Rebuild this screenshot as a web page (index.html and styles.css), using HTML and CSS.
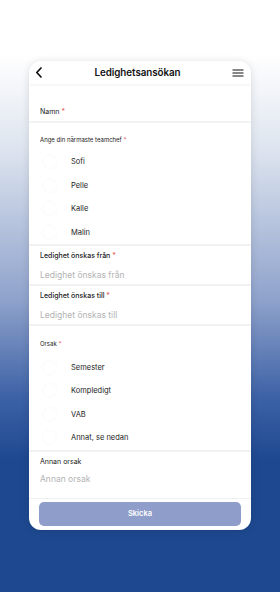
FILE: index.html
```html
<!DOCTYPE html>
<html>
<head>
    <title>Ledighetsansökan</title>
    <link rel="stylesheet" href="styles.css">
</head>
<body>
    <div class="page">
        <div class="card">
            <!-- Top bar -->
            <div class="topbar">
                <svg class="back" width="8" height="11" viewBox="0 0 8 11">
                    <path d="M6 1 L1.8 5.5 L6 10" fill="none" stroke="#111" stroke-width="1.7" stroke-linecap="round" stroke-linejoin="round"/>
                </svg>
                <div class="title">Ledighetsansökan</div>
                <svg class="menu" width="12" height="8" viewBox="0 0 12 8">
                    <path d="M0.5 1 H11.5 M0.5 4 H11.5 M0.5 7 H11.5" stroke="#111" stroke-width="1.1"/>
                </svg>
            </div>

            <!-- Namn -->
            <div class="section name">
                <div class="label">Namn <span class="req">*</span></div>
            </div>

            <!-- Teamchef -->
            <div class="section choice">
                <div class="label small">Ange din närmaste teamchef <span class="req">*</span></div>
                <div class="option"><span class="radio"></span>Sofi</div>
                <div class="option"><span class="radio"></span>Pelle</div>
                <div class="option"><span class="radio"></span>Kalle</div>
                <div class="option"><span class="radio"></span>Malin</div>
            </div>

            <!-- Datum -->
            <div class="section date">
                <div class="label strong">Ledighet önskas från <span class="req">*</span></div>
                <div class="placeholder">Ledighet önskas från</div>
            </div>
            <div class="section date">
                <div class="label strong">Ledighet önskas till <span class="req">*</span></div>
                <div class="placeholder">Ledighet önskas till</div>
            </div>

            <!-- Orsak -->
            <div class="section choice reason">
                <div class="label small">Orsak <span class="req">*</span></div>
                <div class="option"><span class="radio"></span>Semester</div>
                <div class="option"><span class="radio"></span>Kompledigt</div>
                <div class="option"><span class="radio"></span>VAB</div>
                <div class="option"><span class="radio"></span>Annat, se nedan</div>
            </div>

            <!-- Annan orsak -->
            <div class="section other">
                <div class="label">Annan orsak</div>
                <div class="placeholder">Annan orsak</div>
            </div>

            <div class="footer">
                <button class="submit">Skicka</button>
            </div>
        </div>
    </div>
</body>
</html>
```

FILE: styles.css
```css
body {
    margin: 0;
    height: 592px;
    overflow: hidden;
    font-family: Inter, "Noto Sans", sans-serif;
    background: linear-gradient(to bottom, #ffffff 0, #ffffff 55px, #dde4ef 150px, #8ea2cb 300px, #3b60a5 400px, #1e4990 460px, #1e4990 100%);
    color: #111;
}

.page {
    padding: 61px 29px 0;
}

.card {
    background-color: #fff;
    border-radius: 12px;
    box-shadow: 0 1px 8px rgba(0, 0, 0, 0.12);
    overflow: hidden;
}

.topbar {
    height: 23px;
    display: flex;
    align-items: center;
    justify-content: space-between;
    padding: 0 7px 0 6px;
    box-shadow: 0 1px 3px rgba(0, 0, 0, 0.06);
    position: relative;
}

.title {
    font-size: 9.8px;
    font-weight: 600;
    letter-spacing: -0.05px;
}

.section {
    padding: 0 11px;
    border-bottom: 2px solid #f1f2f4;
}

.label {
    font-size: 7px;
    line-height: 10px;
    color: #222;
}

.label.small {
    font-size: 6px;
}

.label.strong {
    font-weight: 500;
}

.req {
    color: #e05a5a;
}

.name {
    padding-top: 23px;
    padding-bottom: 4px;
}

.choice {
    padding-top: 12px;
}

.choice .label {
    margin-bottom: 5px;
}

.reason {
    padding-top: 13px;
}

.reason .label {
    margin-bottom: 6px;
}

.option {
    height: 23.6px;
    display: flex;
    align-items: center;
    font-size: 7.5px;
    color: #222;
}

.radio {
    width: 13px;
    height: 13px;
    border-radius: 50%;
    border: 1px solid #fafbfc;
    margin: 0 14px 0 2px;
}

.date {
    padding-top: 5px;
    padding-bottom: 3px;
}

.placeholder {
    font-size: 8.5px;
    line-height: 12px;
    color: #b3b3b3;
    margin-top: 8px;
}

.other {
    padding-top: 5px;
    padding-bottom: 13px;
    border-bottom: 1px solid #eef0f2;
}

.other .placeholder {
    margin-top: 6px;
}

.footer {
    padding: 3px 10px 4px;
}

.submit {
    display: block;
    width: 100%;
    height: 24px;
    border: none;
    border-radius: 5px;
    background-color: #8e9dca;
    color: #fff;
    font-family: Inter, "Noto Sans", sans-serif;
    font-size: 7.5px;
    font-weight: 600;
}
```
